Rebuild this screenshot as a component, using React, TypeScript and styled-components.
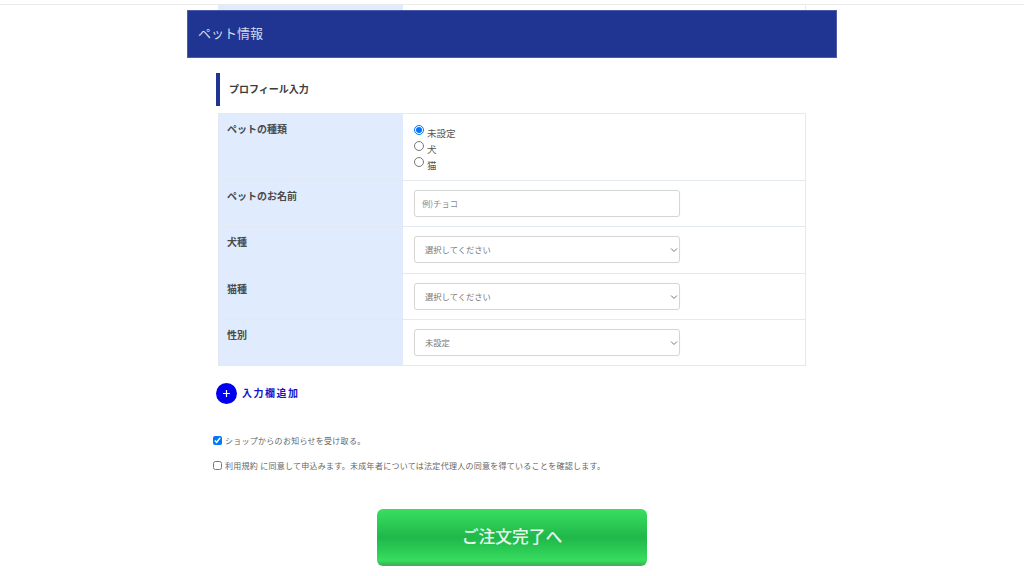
import styled, { createGlobalStyle } from 'styled-components'

const GlobalStyle = createGlobalStyle`
  html, body {
    margin: 0;
    padding: 0;
    height: 576px;
    overflow: hidden;
    background: #fff;
    font-family: "Noto Sans CJK JP", "Noto Sans", sans-serif;
    color: #444;
  }
`

const Page = styled.div`
  width: 1024px;
  height: 576px;
  overflow: hidden;
  padding-top: 4px;
  box-sizing: border-box;
`

const TopLine = styled.div`
  height: 1px;
  background: #e9ebee;
`

const CutRow = styled.div`
  width: 588px;
  height: 5px;
  margin-left: 218px;
  display: flex;
  border-right: 1px solid #e6ebf5;
  border-left: 1px solid #e6ebf5;
  box-sizing: border-box;

  div {
    width: 184px;
    background: #e0ecfd;
  }
`

const Container = styled.div`
  width: 650px;
  margin-left: 187px;
`

const Banner = styled.h1`
  height: 48px;
  margin: 0;
  padding: 0 0 3px 10px;
  display: flex;
  align-items: center;
  background: #203491;
  color: #d5d9ea;
  font-size: 13px;
  font-weight: 400;
  box-sizing: border-box;
  border: 1px solid #4a5ba8;
`

const Content = styled.div`
  padding: 15px 0 0 29px;
`

const SectionTitle = styled.h2`
  height: 33px;
  margin: 0 0 7px;
  padding: 0 0 2px 9px;
  display: flex;
  align-items: center;
  border-left: 4px solid #203491;
  color: #3c3c3c;
  font-size: 10px;
  font-weight: 700;
  box-sizing: border-box;
`

const FormTable = styled.div`
  width: 588px;
  margin-left: 2px;
  border: 1px solid #e3e8f2;
  box-sizing: border-box;
`

const Row = styled.div<{ $height: number }>`
  display: flex;
  height: ${p => p.$height}px;
  border-bottom: 1px solid #e3e8f2;
  box-sizing: border-box;

  &:last-child {
    border-bottom: 0;
  }
`

const Label = styled.div`
  width: 184px;
  flex: none;
  padding: 7px 0 0 8px;
  background: #e0ecfd;
  color: #4a4a4a;
  font-size: 10px;
  font-weight: 700;
  line-height: 15px;
  box-sizing: border-box;
`

const Cell = styled.div`
  flex: 1;
  padding: 9px 0 0 11px;
  box-sizing: border-box;
`

const RadioCell = styled(Cell)`
  padding-top: 11px;
`

const RadioLine = styled.label`
  display: flex;
  height: 16px;
  font-size: 9.5px;
  line-height: 16px;
  color: #555;

  input {
    width: 10px;
    height: 10px;
    margin: 0 3px 0 0;
    flex: none;
  }
`

const TextField = styled.div`
  width: 266px;
  height: 27px;
  padding: 0 0 2px 7px;
  display: flex;
  align-items: center;
  border: 1px solid #d6d6d6;
  border-radius: 3px;
  color: #8b8b8b;
  font-size: 8.3px;
  box-sizing: border-box;
  box-shadow: 0 0 1px #e6e6e6;
`

const SelectField = styled(TextField)`
  padding: 0 1px 2px 10px;
  justify-content: space-between;
  color: #777;

  svg {
    flex: none;
    margin-top: 2px;
  }
`

const AddLink = styled.div`
  margin-top: 17px;
  display: flex;
  align-items: center;
  gap: 5px;
  color: #1414c8;
  font-size: 10px;
  font-weight: 700;
  letter-spacing: 1.5px;
`

const AddText = styled.span`
  margin-top: -2px;
`

const PlusCircle = styled.span`
  width: 21px;
  height: 21px;
  display: flex;
  align-items: center;
  justify-content: center;
  border-radius: 50%;
  background: #0000ee;
  flex: none;
`

const Agreements = styled.div`
  margin: 31px 0 0 -3px;
  display: flex;
  flex-direction: column;
  gap: 15px;
`

const CheckLine = styled.label`
  display: flex;
  align-items: center;
  height: 10px;
  color: #666;
  font-size: 8px;
  letter-spacing: 0.27px;
  white-space: nowrap;

  input {
    width: 9px;
    height: 9px;
    margin: 0 3px 0 0;
    flex: none;
  }
`

const SubmitRow = styled.div`
  margin-top: 39px;
  margin-left: 161px;
`

const SubmitButton = styled.button`
  width: 270px;
  height: 57px;
  padding: 0 0 3px;
  display: block;
  border: 0;
  border-radius: 6px;
  background: linear-gradient(#3ade60 0%, #2ccb55 25%, #1fb84a 50%, #2ccb55 72%, #38dc5e 90%, #2fc454 96%, #6f8f78 100%);
  color: #e6f7ea;
  font-family: inherit;
  font-size: 16.8px;
  font-weight: 500;
`

function Chevron() {
  return (
    <svg width="8" height="6" viewBox="0 0 8 6">
      <path d="M1 1.5 L4 4.5 L7 1.5" fill="none" stroke="#777" strokeWidth="1" />
    </svg>
  )
}

function Select({ text }: { text: string }) {
  return (
    <SelectField>
      {text}
      <Chevron />
    </SelectField>
  )
}

export default function App() {
  return (
    <Page>
      <GlobalStyle />
      <TopLine />
      <CutRow><div /></CutRow>
      <Container>
        <Banner>ペット情報</Banner>
        <Content>
          <SectionTitle>プロフィール入力</SectionTitle>
          <FormTable>
            <Row $height={67}>
              <Label>ペットの種類</Label>
              <RadioCell>
                <RadioLine><input type="radio" name="kind" defaultChecked /><span>未設定</span></RadioLine>
                <RadioLine><input type="radio" name="kind" /><span>犬</span></RadioLine>
                <RadioLine><input type="radio" name="kind" /><span>猫</span></RadioLine>
              </RadioCell>
            </Row>
            <Row $height={46}>
              <Label>ペットのお名前</Label>
              <Cell><TextField>例)チョコ</TextField></Cell>
            </Row>
            <Row $height={47}>
              <Label>犬種</Label>
              <Cell><Select text="選択してください" /></Cell>
            </Row>
            <Row $height={46}>
              <Label>猫種</Label>
              <Cell><Select text="選択してください" /></Cell>
            </Row>
            <Row $height={45}>
              <Label>性別</Label>
              <Cell><Select text="未設定" /></Cell>
            </Row>
          </FormTable>
          <AddLink>
            <PlusCircle>
              <svg width="9" height="9" viewBox="0 0 9 9">
                <path d="M4.5 1 V8 M1 4.5 H8" stroke="#fff" strokeWidth="1.2" />
              </svg>
            </PlusCircle>
            <AddText>入力欄追加</AddText>
          </AddLink>
          <Agreements>
            <CheckLine><input type="checkbox" defaultChecked />ショップからのお知らせを受け取る。</CheckLine>
            <CheckLine><input type="checkbox" />利用規約 に同意して申込みます。未成年者については法定代理人の同意を得ていることを確認します。</CheckLine>
          </Agreements>
          <SubmitRow>
            <SubmitButton>ご注文完了へ</SubmitButton>
          </SubmitRow>
        </Content>
      </Container>
    </Page>
  )
}
